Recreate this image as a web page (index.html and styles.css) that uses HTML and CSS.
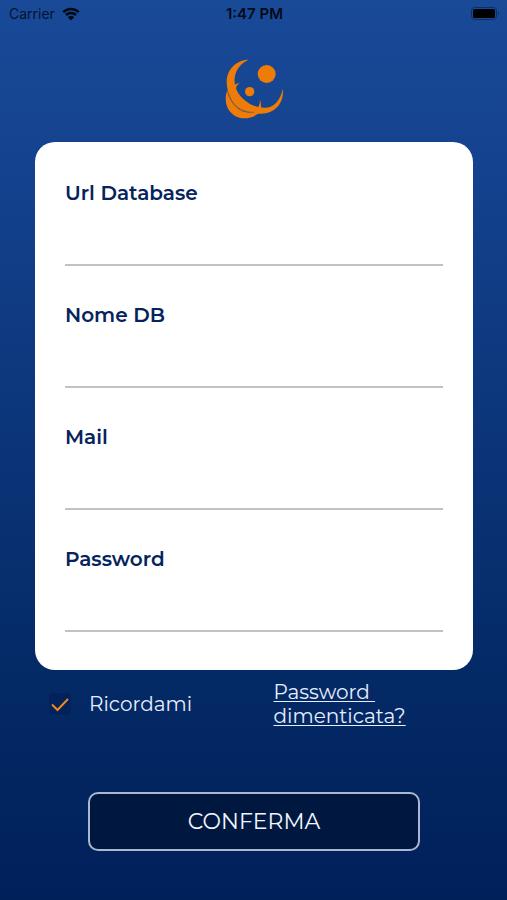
FILE: index.html
```html
<!DOCTYPE html>
<html lang="it">
<head>
<meta charset="utf-8">
<meta name="viewport" content="width=device-width, initial-scale=1">
<title>Accesso</title>
<link rel="stylesheet" href="styles.css">
</head>
<body>
<header class="status">
  <span class="carrier">Carrier
    <svg class="wifi" viewBox="0 0 18 14" aria-hidden="true">
      <path d="M1.3 5.2a11 11 0 0 1 15.4 0M4 8a7.200 7.200 0 0 1 10 0"/>
      <path class="wifi-dot" d="M9 13.500 5.900 10.300a4.500 4.500 0 0 1 6.200 0z"/>
    </svg>
  </span>
  <span class="clock">1:47 PM</span>
  <svg class="battery" viewBox="0 0 30 16" aria-hidden="true">
    <rect class="shell" x="1.500" y="1.500" width="25" height="12" rx="3"/>
    <rect x="3" y="3" width="22" height="9" rx="1.500"/>
    <path class="tip" d="M28 5.500q2 2 0 4z"/>
  </svg>
</header>
<main class="login">
  <svg class="logo" viewBox="0 0 240 228" role="img" aria-label="Logo">
    <circle cx="158" cy="72" r="27"/>
    <circle cx="107" cy="125" r="14"/>
    <path d="M103 29C68 29 38 58 38 96c0 34 18 61 44 79 18 12 38 16 60 16 40 0 70-32 64-75-6 34-26 57-54 57-32 0-60-17-78-42C52 98 58 51 103 29z"/>
    <path d="M40 120c-8 22-6 46 6 62 20 28 60 30 88 8l-14-3c-20 3-36-1-50-13-18-15-28-34-30-54z"/>
    <path d="M42 122c2 18 12 36 28 50 14 12 30 17 50 15l10-3-40-22-34-50z"/>
    <path class="gap" d="M42 126c5 18 15 36 30 47 13 10 30 14 48 14"/>
    <path d="M57 109c6-6 13-10 21-11-8 5-11 10-12 18zM129 176c7-9 10-17 8-28 4 9 5 20 4 29z"/>
  </svg>
  <form class="form">
    <section class="card">
      <div class="field"><label for="url">Url Database</label><input id="url" type="text"></div>
      <div class="field"><label for="db">Nome DB</label><input id="db" type="text"></div>
      <div class="field"><label for="mail">Mail</label><input id="mail" type="email"></div>
      <div class="field"><label for="password">Password</label><input id="password" type="password"></div>
    </section>
    <div class="options">
      <label class="remember">
        <span class="tick">
          <input type="checkbox" checked>
          <svg viewBox="0 0 20 20" aria-hidden="true"><path d="M2 10.500 7.500 16 18 5"/></svg>
        </span>
        Ricordami
      </label>
      <a class="forgot" href="#">Password&nbsp;<br>dimenticata?</a>
    </div>
    <button class="confirm" type="submit">CONFERMA</button>
  </form>
</main>
</body>
</html>
```
FILE: styles.css
```css
* {
  box-sizing: border-box;
}

body {
  margin: 0;
  min-height: 100vh;
  background: linear-gradient(#194a97, #154390 16%, #042a66 75%, #00205a);
  color: #e6eeff;
  font-family: Montserrat, Inter, sans-serif;
  font-size: 20px;
  line-height: 24px;
}

.status {
  display: grid;
  grid-template-columns: 1fr auto 1fr;
  align-items: center;
  height: 28px;
  padding: 0 7px 0 9px;
  color: #04132e;
  font-family: Inter, sans-serif;
  font-size: 14px;
}

.carrier {
  display: flex;
  align-items: center;
  gap: 7px;
}

.clock {
  color: #020a18;
  font-size: 15px;
  font-weight: 600;
}

.wifi {
  width: 18px;
  height: 14px;
  fill: none;
  stroke: #000812;
  stroke-width: 2.500;
}

.wifi .wifi-dot {
  fill: #000812;
  stroke: none;
}

.battery {
  justify-self: end;
  width: 30px;
  height: 16px;
}

.battery .shell {
  fill: none;
  stroke: #0c2e66;
}

.battery .tip {
  fill: #0c2e66;
}

.login {
  display: flex;
  flex-direction: column;
  align-items: center;
  padding: 22px 34px 48px 35px;
}

.logo {
  width: 80px;
  height: 76px;
  fill: #ee7c07;
}

.logo .gap {
  fill: none;
  stroke: #8a6150;
  stroke-width: 3;
}

.form {
  display: flex;
  flex-direction: column;
  align-self: stretch;
  margin-top: 16px;
}

.card {
  display: grid;
  gap: 37px;
  padding: 39px 30px 38px;
  border-radius: 20px;
  background: #fff;
}

.field {
  display: flex;
  flex-direction: column;
}

.field label {
  color: #05235c;
  font-weight: 600;
}

.field input {
  width: 100%;
  height: 61px;
  padding: 24px 0 4px;
  border: 0;
  border-bottom: 2px solid #c2c2c4;
  border-radius: 0;
  background: none;
  color: #05235c;
  font: inherit;
  outline: 0;
}

.options {
  display: grid;
  grid-template-columns: 9fr 8fr;
  align-items: center;
  padding: 10px 0 0 14px;
}

.remember {
  display: flex;
  align-items: center;
  gap: 18px;
}

.tick {
  display: grid;
  width: 22px;
  height: 22px;
  border-radius: 3px;
  background: #03215a;
}

.tick input,
.tick svg {
  grid-area: 1 / 1;
  place-self: center;
  width: 20px;
  height: 20px;
  margin: 0;
}

.tick input {
  appearance: none;
}

.tick svg {
  fill: none;
  stroke: #ee8a1c;
  stroke-width: 2;
  pointer-events: none;
}

.tick input:not(:checked) + svg {
  visibility: hidden;
}

.forgot {
  color: inherit;
  text-decoration-thickness: 1px;
  text-underline-offset: 2px;
}

.confirm {
  height: 59px;
  margin: 64px 53px 0;
  border: 2px solid #a9b7d0;
  border-radius: 10px;
  background: #00183f;
  color: #f0f6ff;
  font: inherit;
  font-size: 22px;
}
```
